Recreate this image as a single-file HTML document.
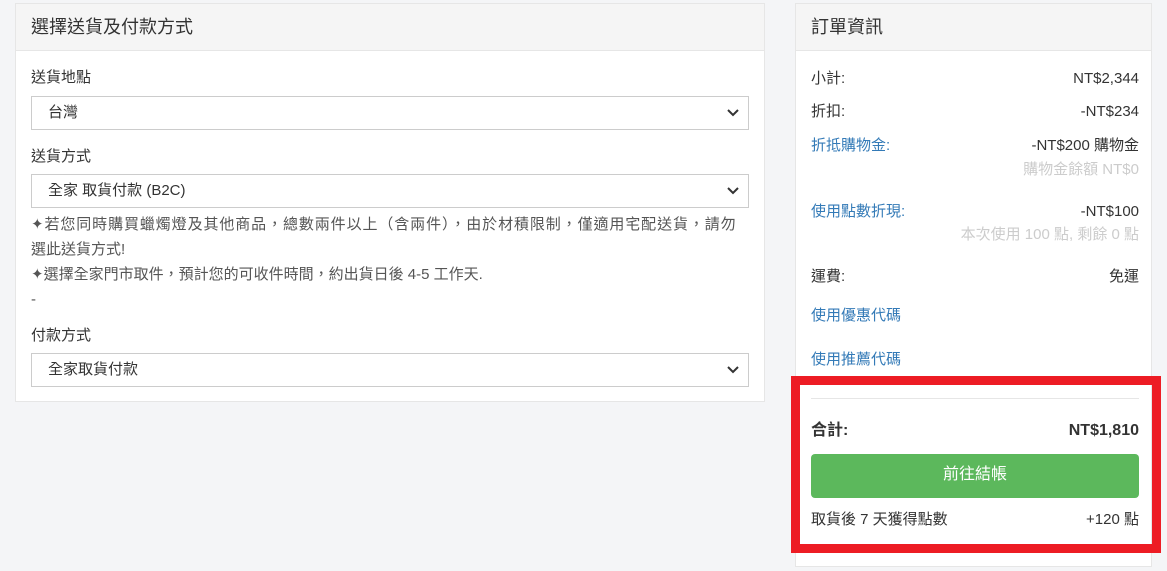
<!DOCTYPE html>
<html><head><meta charset="utf-8"><style>
*{box-sizing:border-box;margin:0;padding:0}
body{width:1167px;height:571px;background:#f4f5f7;font-family:"Liberation Sans","Noto Sans CJK TC",sans-serif;font-size:15px;color:#333;position:relative;overflow:hidden}
.p{position:absolute;background:#fff;border:1px solid #e6e6e6}
.h{background:#f5f5f5;border-bottom:1px solid #e6e6e6;height:47px;padding:0 15px;line-height:46px;font-size:18px;color:#333}
.a{position:absolute;white-space:nowrap;line-height:20px;height:20px}
.sel{position:absolute;left:15px;width:718px;height:34px;border:1px solid #ccc;background:#fff;padding-left:16px;line-height:32px;font-size:15px}
.sel svg{position:absolute;right:9px;top:12px}
.bl{color:#337ab7}.g{color:#ccc}.r{right:12px;text-align:right}
</style></head><body>
<div class="p" style="left:15px;top:3px;width:750px;height:399px">
<div class="h">選擇送貨及付款方式</div>
<div class="a" style="left:15px;top:64px">送貨地點</div>
<div class="sel" style="top:92px">台灣<svg width="12" height="8" viewBox="0 0 12 8"><path d="M1 1l5 5 5-5" fill="none" stroke="#333" stroke-width="2"/></svg></div>
<div class="a" style="left:15px;top:143px">送貨方式</div>
<div class="sel" style="top:170px">全家 取貨付款 (B2C)<svg width="12" height="8" viewBox="0 0 12 8"><path d="M1 1l5 5 5-5" fill="none" stroke="#333" stroke-width="2"/></svg></div>
<div class="a" style="left:15px;top:208px;height:auto;width:720px;line-height:25px;color:#555"><span style="letter-spacing:0.9px">✦若您同時購買蠟燭燈及其他商品，總數兩件以上（含兩件），由於材積限制，僅適用宅配送貨，請勿</span><br>選此送貨方式!<br>✦選擇全家門市取件，預計您的可收件時間，約出貨日後 4-5 工作天.<br>-</div>
<div class="a" style="left:15px;top:322px">付款方式</div>
<div class="sel" style="top:349px">全家取貨付款<svg width="12" height="8" viewBox="0 0 12 8"><path d="M1 1l5 5 5-5" fill="none" stroke="#333" stroke-width="2"/></svg></div>
</div>
<div class="p" style="left:795px;top:3px;width:357px;height:564px">
<div class="h">訂單資訊</div>
<div class="a" style="left:15px;top:65px">小計:</div><div class="a r" style="top:65px">NT$2,344</div>
<div class="a" style="left:15px;top:98px">折扣:</div><div class="a r" style="top:98px">-NT$234</div>
<div class="a bl" style="left:15px;top:132px">折抵購物金:</div><div class="a r" style="top:132px">-NT$200 購物金</div>
<div class="a r g" style="top:156px">購物金餘額 NT$0</div>
<div class="a bl" style="left:15px;top:198px">使用點數折現:</div><div class="a r" style="top:198px">-NT$100</div>
<div class="a r g" style="top:221px">本次使用 100 點, 剩餘 0 點</div>
<div class="a" style="left:15px;top:263px">運費:</div><div class="a r" style="top:263px">免運</div>
<div class="a bl" style="left:15px;top:302px">使用優惠代碼</div>
<div class="a bl" style="left:15px;top:346px">使用推薦代碼</div>
<div class="a" style="left:15px;right:12px;top:394px;height:0;border-top:1px solid #e6e6e6"></div>
<div class="a" style="left:15px;top:417px;font-weight:bold;font-size:16px">合計:</div><div class="a r" style="top:417px;font-weight:bold;font-size:16px">NT$1,810</div>
<div class="a" style="left:15px;right:12px;top:450px;height:44px;background:#5cb85c;border-radius:4px;color:#fff;text-align:center;line-height:42px;font-size:16px">前往結帳</div>
<div class="a" style="left:15px;top:506px">取貨後 7 天獲得點數</div><div class="a r" style="top:506px">+120 點</div>
</div>
<div style="position:absolute;left:791px;top:376px;width:370px;height:177px;border:9px solid #ed1c24"></div>
</body></html>
